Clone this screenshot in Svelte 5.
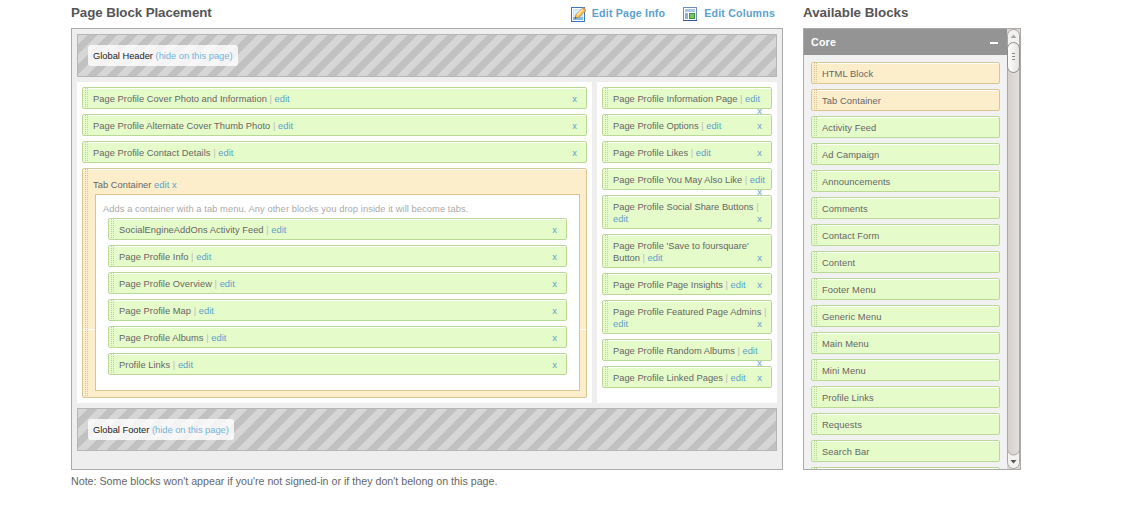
<script>
  const main = ['Page Profile Cover Photo and Information', 'Page Profile Alternate Cover Thumb Photo', 'Page Profile Contact Details'];
  const tabs = ['SocialEngineAddOns Activity Feed', 'Page Profile Info', 'Page Profile Overview', 'Page Profile Map', 'Page Profile Albums', 'Profile Links'];
  const side = [
    { lines: ['Page Profile Information Page'] },
    { lines: ['Page Profile Options'] },
    { lines: ['Page Profile Likes'] },
    { lines: ['Page Profile You May Also Like'] },
    { lines: ['Page Profile Social Share Buttons'], breakEdit: true },
    { lines: ["Page Profile 'Save to foursquare'", 'Button'] },
    { lines: ['Page Profile Page Insights'] },
    { lines: ['Page Profile Featured Page Admins'], breakEdit: true },
    { lines: ['Page Profile Random Albums'] },
    { lines: ['Page Profile Linked Pages'] }
  ];
  const available = ['HTML Block', 'Tab Container', 'Activity Feed', 'Ad Campaign', 'Announcements', 'Comments', 'Contact Form', 'Content', 'Footer Menu', 'Generic Menu', 'Main Menu', 'Mini Menu', 'Profile Links', 'Requests', 'Search Bar', ''];
</script>

{#snippet block(lines, breakEdit)}
  <li class="block">
    <span class="name">{#each lines as line, i}{#if i > 0}<br />{/if}{line}{/each} <i class="sep">|</i>{#if breakEdit}<br />{:else}{' '}{/if}<a href="#edit">edit</a></span>
    <a class="remove" href="#remove">x</a>
  </li>
{/snippet}

<div class="page">
  <section class="placement">
    <header class="top">
      <h3>Page Block Placement</h3>
      <nav>
        <a href="#info">
          <svg width="16" height="16" viewBox="0 0 16 16">
            <rect x=".5" y="1.5" width="13" height="14" fill="#fff" stroke="#3d76bd" />
            <rect x="2" y="3" width="10" height="11" fill="#c8e4f8" />
            <path d="M2 11h10v3H2z" fill="#82bbe8" />
            <path d="M3 5h6M3 7h5M3 9h3" stroke="#eef8ff" />
            <path d="M4 12.5l1-4 6.800-6.500 3 2.800-7 6.500z" fill="#f6c55b" stroke="#a57a36" stroke-width=".7" />
            <path d="M6 9l6-6" stroke="#fff0b0" stroke-width="1.3" />
            <path d="M11 2.2l1.200-1.200 2.700 2.600-1.200 1.300z" fill="#db9460" />
            <path d="M4 12.500l.4-1.600 1.300 1.200z" fill="#333" />
          </svg>Edit Page Info</a>
        <a href="#columns">
          <svg width="16" height="16" viewBox="0 0 16 16">
            <rect x=".5" y="1.500" width="13" height="13" fill="#fff" stroke="#6f8bbf" />
            <path d="M0 14.500h14" stroke="#37599a" />
            <rect x="2" y="3" width="10" height="3" fill="#a9c6e8" />
            <rect x="2" y="7" width="3" height="6" fill="#8caed8" />
            <rect x="6.500" y="7.500" width="5" height="5" fill="#78c463" stroke="#3f993b" />
          </svg>Edit Columns</a>
      </nav>
    </header>
    <div class="stage">
      <div class="global"><div class="pill">Global Header <a href="#hide">(hide on this page)</a></div></div>
      <div class="columns">
        <ul class="column wide">
          {#each main as m}{@render block([m], false)}{/each}
          <li class="block tab">
            <div class="tabtitle">Tab Container <a href="#edit">edit</a> <a href="#x">x</a></div>
            <div class="inner">
              <p>Adds a container with a tab menu. Any other blocks you drop inside it will become tabs.</p>
              <ul>
                {#each tabs as t}{@render block([t], false)}{/each}
              </ul>
            </div>
          </li>
        </ul>
        <ul class="column narrow">
          {#each side as s}{@render block(s.lines, s.breakEdit)}{/each}
        </ul>
      </div>
      <div class="global"><div class="pill">Global Footer <a href="#hide">(hide on this page)</a></div></div>
    </div>
    <p class="note">Note: Some blocks won't appear if you're not signed-in or if they don't belong on this page.</p>
  </section>

  <section class="available">
    <header class="top"><h3>Available Blocks</h3></header>
    <div class="palette">
      <div class="list">
        <div class="core"><b>Core</b><i></i></div>
        <ul>
          {#each available as a, i}<li class="block" class:cream={i < 2}>{a}</li>{/each}
        </ul>
      </div>
      <svg class="scroll" width="13" height="440" viewBox="0 0 13 440">
        <defs>
          <linearGradient id="thumb"><stop offset="0" stop-color="#fff" /><stop offset="1" stop-color="#e3e0de" /></linearGradient>
          <linearGradient id="track"><stop offset="0" stop-color="#d3cfcc" /><stop offset="1" stop-color="#e3e0de" /></linearGradient>
        </defs>
        <rect width="13" height="440" fill="#dad7d5" />
        <rect x=".5" y=".5" width="12" height="439" rx="6" fill="#f2f1f0" stroke="#aaa6a3" />
        <path d="M.5 18V420a6 6 0 0 0 12 0V18z" fill="url(#track)" stroke="#aaa6a3" />
        <path d="M3.500 9l3-3.500 3 3.500z" fill="#aaa7a4" />
        <rect x=".5" y="13.500" width="12" height="30" rx="6" fill="url(#thumb)" stroke="#8f8b88" />
        <path d="M5 24.500h3M5 27.500h3M5 30.500h3" stroke="#8a8683" />
        <path d="M3.500 431l3 3.500 3-3.500z" fill="#555" />
      </svg>
    </div>
  </section>
</div>

<style>
  .page {
    display: flex;
    gap: 20px;
    width: 950px;
    height: 506px;
    margin-left: 71px;
    overflow: hidden;
    font: 9.333px/12px "Liberation Sans", Arial, sans-serif;
    color: #666;
  }
  ul { list-style: none; margin: 0; padding: 0; }
  a { color: #5ba1cd; text-decoration: none; }
  .placement { width: 712px; }
  .available { width: 218px; }
  .top { height: 28px; display: flex; justify-content: space-between; }
  h3 { margin: 4px 0 0; font-size: 13.333px; line-height: 17px; color: #555; white-space: nowrap; }
  .placement h3 { letter-spacing: -.08px; }
  nav { display: flex; gap: 18px; padding: 6px 8px 0 0; font-size: 10.667px; line-height: 15px; font-weight: bold; letter-spacing: .17px; }
  nav a { display: flex; gap: 5px; white-space: nowrap; }
  .stage { box-sizing: border-box; height: 442px; border: 1px solid #aaa; background: #eee; padding: 5px; }
  .global {
    box-sizing: border-box;
    height: 43px;
    border: 1px solid #b6b6b6;
    padding: 10px;
    background: linear-gradient(135deg, #d6d6d6 25%, #c1c1c1 25% 50%, #d6d6d6 50% 75%, #c1c1c1 75%) 0 0 / 20px 20px;
  }
  .pill { width: fit-content; padding: 5px 5px 4px; border-radius: 3px; background: rgba(255, 255, 255, .8); color: #222; white-space: nowrap; letter-spacing: -.015px; }
  .pill a { color: #73b3dc; }
  .columns { display: flex; gap: 5px; margin: 5px 0; height: 321px; }
  .column { box-sizing: border-box; background: #fff; padding: 5px; }
  .wide { width: 515px; letter-spacing: .03px; }
  .narrow { width: 180px; }
  .block {
    --fill: #e6fbca;
    --dot: #b5d59a;
    box-sizing: border-box;
    min-height: 22px;
    margin-bottom: 5px;
    padding: 5px 5px 3px 10px;
    border: 1px solid #bbd996;
    border-radius: 2px;
    background:
      conic-gradient(from 0deg at 1px 1px, transparent 75%, var(--dot) 0) 2px 2px / 2px 2px repeat-y,
      conic-gradient(from 0deg at 1px 1px, transparent 75%, var(--dot) 0) 4px 2px / 2px 2px repeat-y,
      repeating-linear-gradient(#fff 0 1px, var(--fill) 1px 160px);
  }
  .cream, .tab { --fill: #fceecb; --dot: #dcc490; border-color: #dbc593; }
  .name { white-space: nowrap; }
  .sep { font-style: normal; color: #bbb; }
  .remove { float: right; margin-right: 4px; }
  .tab { height: 230px; padding: 10px 6px 6px 12px; }
  .tabtitle { margin-left: -2px; }
  .inner { box-sizing: border-box; height: 197px; margin-top: 3px; border: 1px solid #dbc593; background: #fff; padding: 8px 12px; }
  .inner p { margin: 0 0 3px -5px; color: #aaa; white-space: nowrap; letter-spacing: .07px; }
  .note { margin: 4px 0 0; font-size: 10.667px; line-height: 15px; white-space: nowrap; letter-spacing: .01px; }
  .palette { box-sizing: border-box; height: 442px; border: 1px solid #aaa; display: flex; overflow: hidden; }
  .list { width: 203px; background: #f1f1f1; letter-spacing: .07px; }
  .core { display: flex; justify-content: space-between; align-items: center; height: 26px; padding: 0 9px 0 7px; background: #949494; color: #fff; font-size: 10.667px; letter-spacing: .2px; }
  .core i { width: 8px; height: 2px; margin-top: 2px; background: #fff; }
  .list ul { padding: 7px; }
  .scroll { flex: none; }
</style>
